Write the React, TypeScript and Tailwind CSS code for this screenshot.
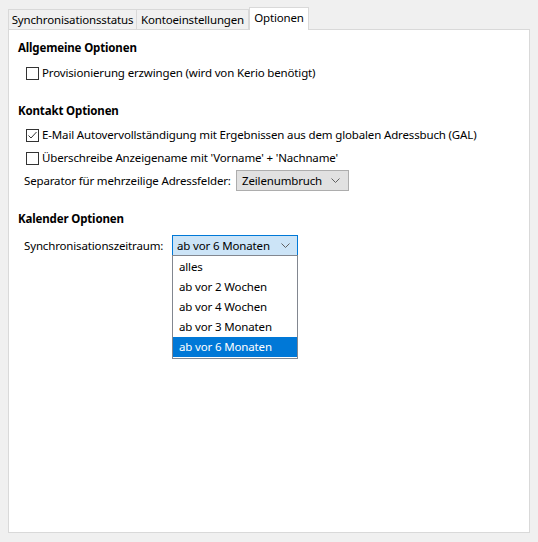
import React from "react";

const font = {
  fontFamily: '"Segoe UI", "Noto Sans", "Liberation Sans", sans-serif',
};

function Chevron() {
  return (
    <svg width="9" height="5" viewBox="0 0 9 5" className="shrink-0">
      <polyline points="0.5,0.5 4.5,4.5 8.5,0.5" fill="none" stroke="#606060" strokeWidth="1" />
    </svg>
  );
}

function Checkbox({ checked, label }: { checked?: boolean; label: string }) {
  return (
    <div className="flex h-[20px] items-center pl-[17px]">
      <div className="flex h-[13px] w-[13px] shrink-0 items-center justify-center border border-[#333333] bg-white">
        {checked && (
          <svg width="11" height="11" viewBox="0 0 11 11">
            <polyline points="1.5,5.5 4,8 9.5,2" fill="none" stroke="#333333" strokeWidth="1" />
          </svg>
        )}
      </div>
      <span className="ml-[3px] whitespace-nowrap">{label}</span>
    </div>
  );
}

function Heading({ children, className }: { children: React.ReactNode; className: string }) {
  return <div className={`h-[20px] pl-[9px] font-bold leading-[20px] ${className}`}>{children}</div>;
}

const periods = ["alles", "ab vor 2 Wochen", "ab vor 4 Wochen", "ab vor 3 Monaten", "ab vor 6 Monaten"];

export default function App() {
  return (
    <div className="h-[542px] w-[538px] bg-[#f0f0f0] text-[11.5px] tracking-[-0.15px] text-black" style={font}>
      {/* tab strip */}
      <div className="flex h-[29px] items-end pl-[8px] pt-[7px]">
        <div className="flex h-[20px] w-[129px] items-center justify-center border border-b-0 border-[#d9d9d9] leading-[18px]">
          Synchronisationsstatus
        </div>
        <div className="flex h-[20px] w-[112px] items-center justify-center border border-b-0 border-l-0 border-[#d9d9d9] leading-[18px]">
          Kontoeinstellungen
        </div>
        <div className="relative z-10 -mb-px flex h-[23px] w-[60px] items-center justify-center border border-b-0 border-[#d9d9d9] bg-white pb-[2px]">
          Optionen
        </div>
      </div>

      {/* options page */}
      <div className="relative ml-[8px] h-[504px] w-[522px] border border-[#d9d9d9] bg-white pt-[8px]">
        <Heading className="">Allgemeine Optionen</Heading>
        <div className="mt-[5px]">
          <Checkbox label="Provisionierung erzwingen (wird von Kerio benötigt)" />
        </div>

        <Heading className="mt-[18px]">Kontakt Optionen</Heading>
        <div className="mt-[4px]">
          <Checkbox checked label="E-Mail Autovervollständigung mit Ergebnissen aus dem globalen Adressbuch (GAL)" />
        </div>
        <div className="mt-[3px]">
          <Checkbox label="Überschreibe Anzeigename mit 'Vorname' + 'Nachname'" />
        </div>
        <div className="mt-[2px] flex h-[21px] items-center pl-[15px]">
          <span className="w-[212px] whitespace-nowrap">Separator für mehrzeilige Adressfelder:</span>
          <div className="flex h-[21px] w-[113px] items-center justify-between border border-[#adadad] bg-[#e1e1e1] pl-[5px] pr-[8px]">
            <span>Zeilenumbruch</span>
            <Chevron />
          </div>
        </div>

        <Heading className="mt-[18px]">Kalender Optionen</Heading>
        <div className="mt-[6px] flex h-[21px] items-center pl-[15px]">
          <span className="w-[148px] whitespace-nowrap">Synchronisationszeitraum:</span>
          <div className="relative">
            <div className="flex h-[21px] w-[126px] items-center justify-between border border-[#0078d7] bg-[#cce4f7] pl-[4px] pr-[7px]">
              <span>ab vor 6 Monaten</span>
              <Chevron />
            </div>
            {/* open list of the period selector */}
            <div className="absolute left-0 top-[20px] z-20 w-[126px] border border-[#828790] bg-white py-px">
              {periods.map((p, i) => (
                <div
                  key={p}
                  className={`h-[20px] whitespace-nowrap pl-[6px] leading-[20px] ${
                    i === periods.length - 1 ? "bg-[#0078d7] text-white" : ""
                  }`}
                >
                  {p}
                </div>
              ))}
            </div>
          </div>
        </div>
      </div>
    </div>
  );
}
